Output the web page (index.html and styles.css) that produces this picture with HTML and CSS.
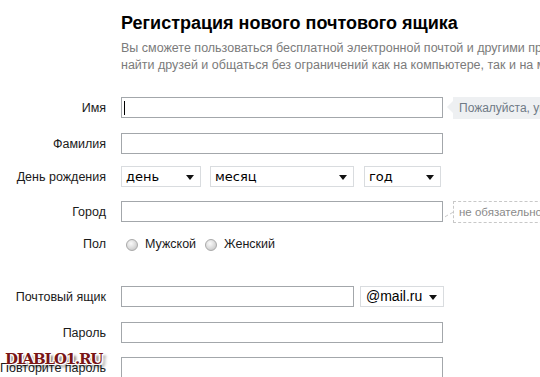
FILE: index.html
```html
<!DOCTYPE html>
<html lang="ru">

<head>
    <meta charset="UTF-8">
    <meta name="viewport" content="width=device-width, initial-scale=1.0">
    <title>Регистрация нового почтового ящика</title>
    <link rel="stylesheet" href="styles.css">
</head>

<body>
    <header class="intro">
        <h1>Регистрация нового почтового ящика</h1>
        <p>Вы сможете пользоваться бесплатной электронной почтой и другими проектами Mail.Ru,<br>найти друзей и общаться без ограничений как на компьютере, так и на мобильном</p>
    </header>

    <form class="reg-form">
        <div class="row row-name">
            <label>Имя</label>
            <div class="field">
                <span class="input focused"><span class="caret"></span></span>
                <span class="hint hint-info">Пожалуйста, укажите имя</span>
            </div>
        </div>

        <div class="row row-surname">
            <label>Фамилия</label>
            <div class="field"><span class="input"></span></div>
        </div>

        <div class="row row-birth">
            <label>День рождения</label>
            <div class="field">
                <span class="select sel-day">день<i class="arrow"></i></span>
                <span class="select sel-month">месяц<i class="arrow"></i></span>
                <span class="select sel-year">год<i class="arrow"></i></span>
            </div>
        </div>

        <div class="row row-city">
            <label>Город</label>
            <div class="field">
                <span class="input"></span>
                <span class="hint hint-optional">не обязательно</span>
            </div>
        </div>

        <div class="row row-sex">
            <label>Пол</label>
            <div class="field radios">
                <span class="radio"></span><span class="radio-text">Мужской</span>
                <span class="radio"></span><span class="radio-text">Женский</span>
            </div>
        </div>

        <div class="row row-mail">
            <label>Почтовый ящик</label>
            <div class="field">
                <span class="input input-short"></span>
                <span class="select sel-domain">@mail.ru<i class="arrow"></i></span>
            </div>
        </div>

        <div class="row row-pass">
            <label>Пароль</label>
            <div class="field"><span class="input"></span></div>
        </div>

        <div class="row row-repeat">
            <label>Повторите пароль</label>
            <div class="field"><span class="input"></span></div>
        </div>
    </form>

    <div class="watermark">DIABLO1.RU</div>
</body>

</html>
```

FILE: styles.css
```css
body {
    margin: 0;
    background: #fff;
    font-family: 'Liberation Sans', Arial, sans-serif;
    color: #111;
    overflow: hidden;
    position: relative;
    height: 377px;
}

.intro {
    margin-left: 121px;
    padding-top: 12px;
    white-space: nowrap;
    overflow: hidden;
}

.intro h1 {
    margin: 0;
    font-size: 18px;
    line-height: 22px;
    font-weight: bold;
    color: #000;
}

.intro p {
    margin: 6px 0 0;
    font-size: 12.5px;
    line-height: 17px;
    color: #7b7b7b;
}

.row {
    display: flex;
    align-items: center;
    height: 21px;
}

.row label {
    width: 106px;
    flex: none;
    display: flex;
    justify-content: flex-end;
    white-space: nowrap;
    font-size: 12.5px;
    color: #1a1a1a;
}

.field {
    margin-left: 15px;
    display: flex;
    align-items: center;
    white-space: nowrap;
}

.row-name { margin-top: 23px; }
.row-surname { margin-top: 15px; }
.row-birth { margin-top: 12px; }
.row-city { margin-top: 14px; }
.row-sex { margin-top: 11px; }
.row-mail { margin-top: 32px; }
.row-pass { margin-top: 15px; }
.row-repeat { margin-top: 14px; }

.input {
    box-sizing: border-box;
    display: block;
    width: 322px;
    height: 21px;
    border: 1px solid #a3a7ab;
    background: #fff;
    position: relative;
}

.input-short {
    width: 233px;
}

.caret {
    position: absolute;
    left: 2px;
    top: 3px;
    width: 1px;
    height: 14px;
    background: #000;
}

.select {
    box-sizing: border-box;
    display: block;
    position: relative;
    height: 21px;
    border: 1px solid #d9dcdf;
    background: #fff;
    padding: 0 0 0 4px;
    font-family: 'DejaVu Sans', Verdana, sans-serif;
    font-size: 13px;
    line-height: 19px;
    color: #000;
}

.sel-day { width: 80px; }
.sel-month { width: 144px; margin-left: 9px; }
.sel-year { width: 77px; margin-left: 10px; }

.sel-domain {
    width: 84px;
    margin-left: 6px;
    font-family: 'Liberation Sans', Arial, sans-serif;
    font-size: 14px;
    padding-left: 5px;
}

.arrow {
    position: absolute;
    right: 6px;
    top: 8px;
    width: 0;
    height: 0;
    border-left: 4px solid transparent;
    border-right: 4px solid transparent;
    border-top: 5px solid #111;
}

.hint {
    position: relative;
    display: block;
    box-sizing: border-box;
    height: 22px;
    margin-left: 10px;
    padding: 0 6px;
    font-size: 12px;
    line-height: 22px;
    color: #777;
}

.hint-info {
    background: #eef0f2;
    color: #6e7a86;
}

.hint-info::before {
    content: "";
    position: absolute;
    left: -6px;
    top: 4px;
    border-top: 6px solid transparent;
    border-bottom: 6px solid transparent;
    border-right: 6px solid #eef0f2;
}

.hint-optional {
    border: 1px dashed #c8c8c8;
    line-height: 20px;
    font-size: 11.5px;
    padding: 0 5px;
    color: #8a8a8a;
}

.hint-optional::before {
    content: "";
    position: absolute;
    left: -9px;
    top: 5px;
    width: 8px;
    height: 8px;
    border-bottom: 1px dashed #c8c8c8;
    transform: skewY(-30deg);
    box-sizing: border-box;
}

.radios {
    margin-left: 20px;
    font-size: 12.5px;
}

.radio {
    display: block;
    box-sizing: border-box;
    width: 12px;
    height: 12px;
    border-radius: 50%;
    border: 1px solid #a9a9a9;
    background: radial-gradient(circle at 40% 35%, #fafafa 0, #dadada 55%, #bdbdbd 100%);
    margin-top: 2px;
}

.radio-text {
    margin-left: 7px;
    margin-right: 9px;
    color: #1a1a1a;
}

.watermark {
    position: absolute;
    left: 5px;
    top: 350px;
    font-family: 'DejaVu Serif', 'Liberation Serif', serif;
    font-weight: bold;
    font-size: 15px;
    letter-spacing: -1.2px;
    color: #7a1515;
    text-shadow: 1px 1px 0 #fff, -1px -1px 0 #fff, 1px -1px 0 #fff, -1px 1px 0 #fff, 3px 3px 3px rgba(0, 0, 0, 0.6);
}
```
